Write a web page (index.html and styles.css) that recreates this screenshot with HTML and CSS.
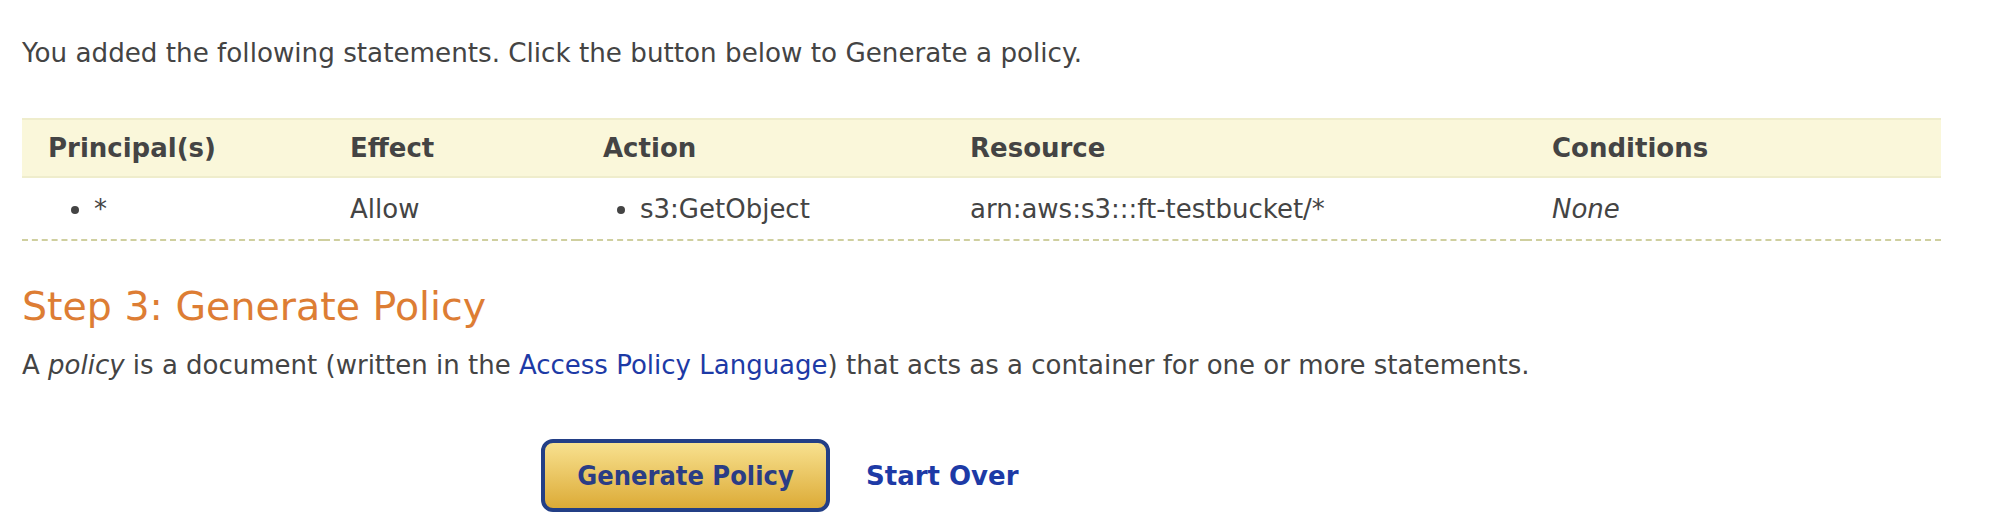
FILE: index.html
```html
<!DOCTYPE html>
<html>
<head>
<meta charset="utf-8">
<link rel="stylesheet" href="styles.css">
</head>
<body>
<div class="page">
  <p class="intro">You added the following statements. Click the button below to Generate a policy.</p>
  <table class="statements">
    <thead>
      <tr>
        <th class="c1">Principal(s)</th>
        <th class="c2">Effect</th>
        <th class="c3">Action</th>
        <th class="c4">Resource</th>
        <th class="c5">Conditions</th>
      </tr>
    </thead>
    <tbody>
      <tr>
        <td><ul class="bul bul-principal"><li>*</li></ul></td>
        <td>Allow</td>
        <td><ul class="bul bul-action"><li>s3:GetObject</li></ul></td>
        <td>arn:aws:s3:::ft-testbucket/*</td>
        <td><em>None</em></td>
      </tr>
    </tbody>
  </table>
  <h2 class="step">Step 3: Generate Policy</h2>
  <p class="desc">A <em>policy</em> is a document (written in the <a href="#" class="link">Access Policy Language</a>) that acts as a container for one or more statements.</p>
  <div class="actions">
    <button class="gen-btn">Generate Policy</button>
    <a href="#" class="start-over">Start Over</a>
  </div>
</div>
</body>
</html>
```
FILE: styles.css
```css
body {
  margin: 0;
  font-family: "DejaVu Sans", Verdana, sans-serif;
  color: #444;
  font-size: 26px;
  background: #fff;
}
.page {
  padding: 38px 0 0 22px;
  width: 1919px;
}
.intro {
  margin: 0;
  line-height: 30px;
  font-size: 26.2px;
}
.statements {
  margin-top: 50px;
  width: 1919px;
  border-collapse: collapse;
  table-layout: fixed;
}
.statements thead tr {
  background: #faf7da;
  border-top: 2px solid #efedcc;
  border-bottom: 2px solid #efedcc;
}
.statements th {
  height: 56px;
  text-align: left;
  font-weight: bold;
  padding: 0 0 0 26px;
  color: #444;
}
.c1 { width: 276px; }
.c2 { width: 227px; }
.c3 { width: 341px; }
.c4 { width: 556px; }
.c5 { width: auto; }
.statements td {
  height: 61px;
  padding: 0 0 0 26px;
  border-bottom: 2px dashed #cfcf9f;
  vertical-align: middle;
}
.bul {
  margin: 0;
  list-style: disc;
}
.bul-principal { padding-left: 46px; }
.bul-action { padding-left: 37px; }
.step {
  margin: 43px 0 0;
  font-size: 39.5px;
  line-height: 44px;
  font-weight: normal;
  color: #dd7d34;
}
.desc {
  margin: 22px 0 0;
  line-height: 30px;
}
.link {
  color: #1d3aa6;
  text-decoration: none;
}
.actions {
  margin: 59px 0 0 519px;
  display: flex;
  align-items: center;
  gap: 36px;
}
.gen-btn {
  width: 289px;
  height: 73px;
  border: 4px solid #233f86;
  border-radius: 12px;
  background: linear-gradient(#f8e18f, #dcab37);
  color: #2a3d85;
  font-family: "DejaVu Sans Condensed", "DejaVu Sans", sans-serif;
  font-size: 27px;
  font-weight: bold;
  padding: 0;
}
.start-over {
  color: #1d3aa6;
  font-weight: bold;
  text-decoration: none;
  font-size: 26px;
}
```
